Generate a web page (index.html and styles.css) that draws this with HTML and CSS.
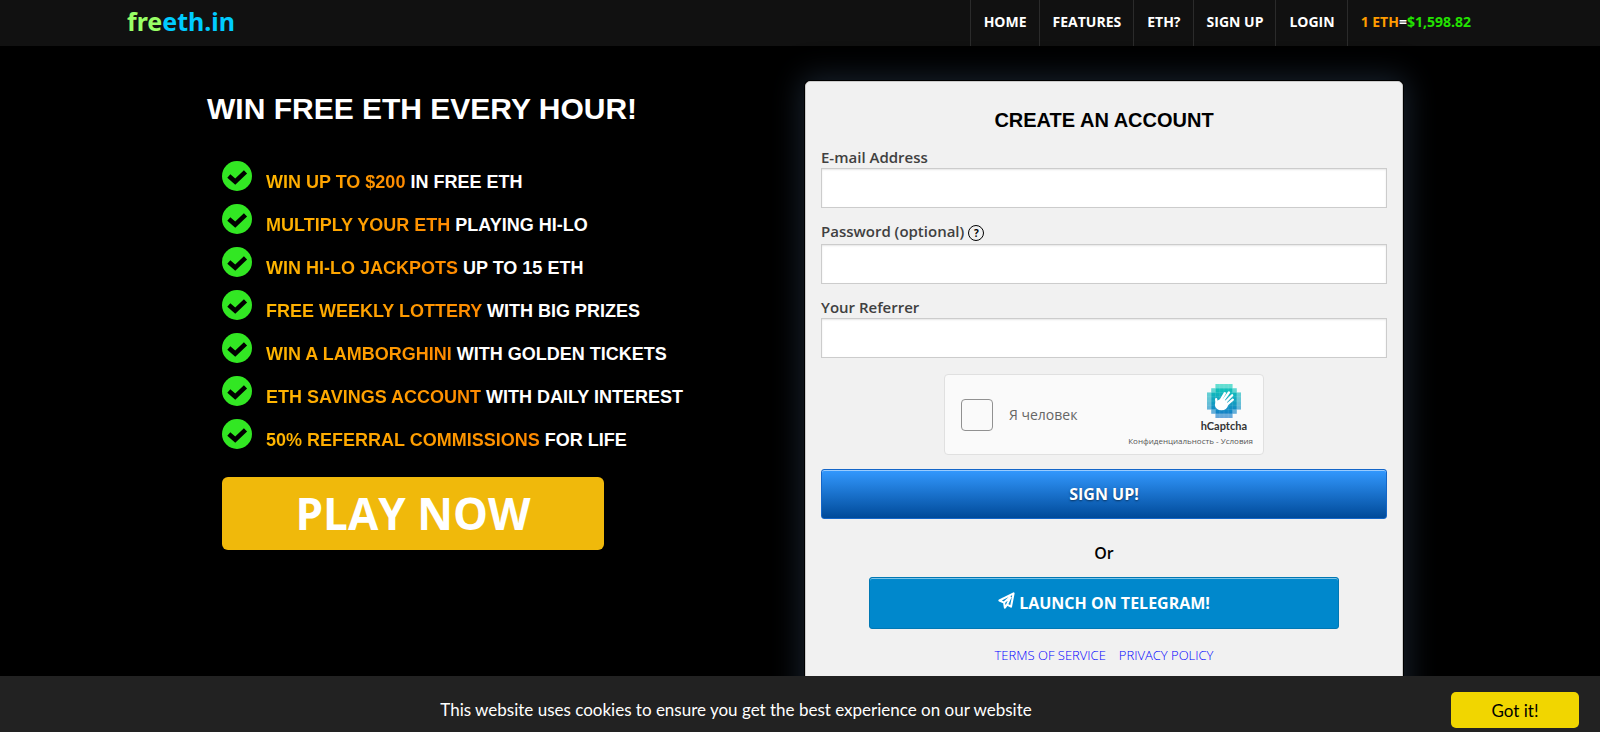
FILE: index.html
```html
<!DOCTYPE html>
<html lang="en">
<head>
<meta charset="utf-8">
<title>freeth.in</title>
<link rel="stylesheet" href="styles.css">
</head>
<body>
<svg class="sprite" aria-hidden="true">
  <symbol id="check" viewBox="0 0 30 30">
    <circle cx="15" cy="15" r="15" fill="#32e723"/>
    <path d="M6.800 15 L13.200 20.600 L23.500 10.800" fill="none" stroke="#000" stroke-width="4.600"/>
  </symbol>
</svg>

<header class="topbar">
  <div class="topbar-inner">
    <a class="logo" href="#"><span class="logo-free">fre</span><span class="logo-eth">eth.in</span></a>
    <nav class="menu">
      <a href="#">HOME</a>
      <a href="#">FEATURES</a>
      <a href="#">ETH?</a>
      <a href="#">SIGN UP</a>
      <a href="#">LOGIN</a>
      <a href="#"><span class="rate-unit">1 ETH</span>=<span class="rate-value">$1,598.82</span></a>
    </nav>
  </div>
</header>

<main class="main">
  <section class="intro">
    <h1>WIN FREE ETH EVERY HOUR!</h1>
    <ul class="perks">
      <li><svg><use href="#check"/></svg><p><span>WIN UP TO $200</span> IN FREE ETH</p></li>
      <li><svg><use href="#check"/></svg><p><span>MULTIPLY YOUR ETH</span> PLAYING HI-LO</p></li>
      <li><svg><use href="#check"/></svg><p><span>WIN HI-LO JACKPOTS</span> UP TO 15 ETH</p></li>
      <li><svg><use href="#check"/></svg><p><span>FREE WEEKLY LOTTERY</span> WITH BIG PRIZES</p></li>
      <li><svg><use href="#check"/></svg><p><span>WIN A LAMBORGHINI</span> WITH GOLDEN TICKETS</p></li>
      <li><svg><use href="#check"/></svg><p><span>ETH SAVINGS ACCOUNT</span> WITH DAILY INTEREST</p></li>
      <li><svg><use href="#check"/></svg><p><span>50% REFERRAL COMMISSIONS</span> FOR LIFE</p></li>
    </ul>
    <button class="play" type="button">PLAY NOW</button>
  </section>

  <form class="card">
    <h2>CREATE AN ACCOUNT</h2>
    <div class="field">
      <label for="email">E-mail Address</label>
      <input id="email" type="email">
    </div>
    <div class="field">
      <label class="with-help" for="password">Password (optional) <span class="help">?</span></label>
      <input id="password" type="password">
    </div>
    <div class="field">
      <label for="referrer">Your Referrer</label>
      <input id="referrer" type="text">
    </div>

    <div class="captcha">
      <div class="captcha-check">
        <input id="human" type="checkbox">
        <label for="human">Я человек</label>
      </div>
      <div class="captcha-brand">
        <svg class="captcha-logo" viewBox="0 0 32 32">
          <defs>
            <linearGradient id="sea" x1="0" y1="0" x2="0" y2="1">
              <stop offset="0" stop-color="#10d0b8"/>
              <stop offset="1" stop-color="#1274c8"/>
            </linearGradient>
          </defs>
          <path fill="url(#sea)" d="M8 0h16v4h4v4h4v16h-4v4h-4v4H8v-4H4v-4H0V8h4V4h4z"/>
          <path fill="#fff" opacity=".35" d="M8 0h16v4H8zM4 4h4v4H4zM24 4h4v4h-4zM0 8h4v16H0zM28 8h4v16h-4zM4 24h4v4H4zM24 24h4v4h-4zM8 28h16v4H8z"/>
          <path stroke="#fff" stroke-opacity=".15" stroke-width=".6" d="M4 0v32M8 0v32M12 0v32M16 0v32M20 0v32M24 0v32M28 0v32M0 4h32M0 8h32M0 12h32M0 16h32M0 20h32M0 24h32M0 28h32"/>
          <ellipse cx="13.600" cy="19.600" rx="6.200" ry="5.200" fill="#fff"/>
          <path stroke="#fff" stroke-width="2.200" stroke-linecap="round" fill="none" d="M8.600 14.200L9.200 19M11.500 17.500L16.800 8.600M13.500 18L20.600 8M15.500 19L23.700 10.600M17 21L24.300 14.800"/>
        </svg>
        <strong>hCaptcha</strong>
        <p><a href="#">Конфиденциальность</a> - <a href="#">Условия</a></p>
      </div>
    </div>

    <button class="signup" type="submit">SIGN UP!</button>
    <p class="or">Or</p>
    <button class="telegram" type="button">
      <svg viewBox="0 0 18 18"><path d="M1.500 9 L16.500 1.500 L13.800 15.500 L9.600 13.300 L7.300 16.500 L6.400 11.200 Z M6.400 11.200 L13.500 4.800 M9.600 13.300 L13.500 4.800" fill="none" stroke="#fff" stroke-width="2.200" stroke-linejoin="round"/></svg>
      LAUNCH ON TELEGRAM!
    </button>
    <p class="legal"><a href="#">TERMS OF SERVICE</a><a href="#">PRIVACY POLICY</a></p>
  </form>
</main>

<aside class="cookies">
  <p>This website uses cookies to ensure you get the best experience on our website</p>
  <button type="button">Got it!</button>
</aside>
</body>
</html>
```
FILE: styles.css
```css
* { box-sizing: border-box; }

body {
  margin: 0;
  background: #000;
  color: #fff;
  font-family: "Open Sans", sans-serif;
  overflow: hidden;
}

h1, h2, p, ul { margin: 0; padding: 0; }
a { text-decoration: none; }
button { font-family: inherit; cursor: pointer; }
.sprite { position: absolute; width: 0; height: 0; }

.topbar { background: #111; }
.topbar-inner {
  display: flex;
  justify-content: space-between;
  max-width: 1370px;
  height: 46px;
  margin: 0 auto;
  padding-left: 12px;
}
.logo {
  font: bold 25px/42px "Noto Sans", sans-serif;
}
.logo-free { color: #99ff66; }
.logo-eth { color: #00ccff; }

.menu { display: flex; }
.menu a {
  padding: 0 12px 0 13px;
  border-left: 1px solid #2b2b2b;
  color: #fff;
  font-size: 14px;
  font-weight: 700;
  line-height: 44px;
}
.menu a:last-child { padding-right: 14px; }
.rate-unit { color: #ff9c00; }
.rate-value { color: #23e300; }

.main {
  display: grid;
  grid-template-columns: 1fr 1fr;
  max-width: 1370px;
  margin: 0 auto;
  padding: 35px 82px 0 92px;
}

.intro h1 {
  padding-top: 9px;
  font: bold 30px/38px "Liberation Sans", sans-serif;
}
.perks {
  padding: 33px 0 0 15px;
  list-style: none;
}
.perks li {
  display: flex;
  gap: 14px;
  height: 43px;
}
.perks svg { width: 30px; height: 30px; }
.perks p {
  padding-top: 10px;
  font: bold 18px/22px "Liberation Sans", sans-serif;
}
.perks span {
  background: linear-gradient(90deg, #ffb700, #ff8a00);
  -webkit-background-clip: text;
  background-clip: text;
  color: transparent;
}
.play {
  width: 382px;
  height: 73px;
  margin: 15px 0 0 15px;
  padding: 0;
  border: 0;
  border-radius: 6px;
  background: #f0b90b;
  color: #fff;
  font-size: 44px;
  font-weight: 700;
  line-height: 73px;
}

.card {
  padding: 25px 15px 80px;
  border: 1px solid #ccc;
  border-radius: 5px;
  background: #f1f1f1;
  box-shadow: 0 0 0 1px #000, 0 0 30px 4px #18222e;
  color: #000;
}
.card h2 {
  padding-bottom: 13px;
  font: bold 20px/26px "Liberation Sans", sans-serif;
  text-align: center;
}
.field { padding-bottom: 12px; }
.field label {
  display: flex;
  align-items: center;
  gap: 4px;
  height: 22px;
  color: #404040;
  font-size: 15px;
  font-weight: 600;
}
.field .with-help {
  height: 24px;
  padding-bottom: 2px;
}
.field input {
  display: block;
  width: 100%;
  height: 40px;
  padding: 8px;
  border: 1px solid #ccc;
  background: #fff;
  box-shadow: inset 0 1px 2px rgba(0, 0, 0, .1);
  font: inherit;
}
.help {
  width: 16px;
  height: 16px;
  margin-top: 4px;
  border: 1px solid #000;
  border-radius: 50%;
  color: #000;
  font-size: 10px;
  font-weight: 700;
  line-height: 14px;
  text-align: center;
}

.captcha {
  display: flex;
  justify-content: space-between;
  width: 320px;
  height: 81px;
  margin: 4px auto 14px;
  padding: 0 10px 0 16px;
  border: 1px solid #e0e0e0;
  border-radius: 4px;
  background: #fafafa;
}
.captcha-check {
  display: flex;
  align-items: center;
  gap: 16px;
  color: #666;
  font-size: 14px;
}
.captcha-check input {
  appearance: none;
  width: 32px;
  height: 32px;
  margin: 0;
  border: 1px solid #919191;
  border-radius: 4px;
  background: #fafafa;
}
.captcha-brand {
  display: flex;
  flex-direction: column;
  align-items: flex-end;
  padding-top: 9px;
}
.captcha-logo { width: 34px; height: 34px; margin-right: 12px; }
.captcha-brand strong {
  margin-right: 6px;
  color: #333;
  font-family: Lato, sans-serif;
  font-size: 11px;
  line-height: 16px;
}
.captcha-brand p { color: #555; font-size: 8px; line-height: 14px; }
.captcha-brand a { color: #555; }

.signup, .telegram {
  display: block;
  color: #fff;
  font-size: 16px;
  font-weight: 700;
  border-radius: 3px;
  text-shadow: 0 1px 2px rgba(0, 0, 0, .5);
}
.signup {
  width: 100%;
  height: 50px;
  border: 1px solid #1466c8;
  background: linear-gradient(#3399ff, #004a99);
  box-shadow: inset 0 1px 0 rgba(255, 255, 255, .5);
}
.or {
  padding: 22px 0 12px;
  font-size: 16px;
  font-weight: 600;
  line-height: 24px;
  text-align: center;
}
.telegram {
  width: 83%;
  height: 52px;
  margin: 0 auto;
  border: 1px solid #0078b4;
  background: #0088cc;
  box-shadow: inset 0 1px 0 rgba(255, 255, 255, .5);
  text-shadow: none;
}
.telegram svg { width: 17px; height: 17px; }
.legal {
  display: flex;
  justify-content: center;
  gap: 13px;
  padding-top: 17px;
  font-size: 13px;
  font-weight: 300;
  line-height: 18px;
}
.legal a { color: #00f; }

.cookies {
  position: fixed;
  right: 0;
  bottom: 0;
  left: 0;
  display: flex;
  align-items: center;
  height: 56px;
  padding: 12px 21px 0 21px;
  background: #222;
  font-family: Lato, sans-serif;
  font-size: 17px;
}
.cookies p { flex: 1; padding-bottom: 2px; text-align: center; }
.cookies button {
  width: 128px;
  height: 36px;
  border: 0;
  border-radius: 5px;
  background: #f1d600;
  color: #000;
  font-size: 17px;
}
```
